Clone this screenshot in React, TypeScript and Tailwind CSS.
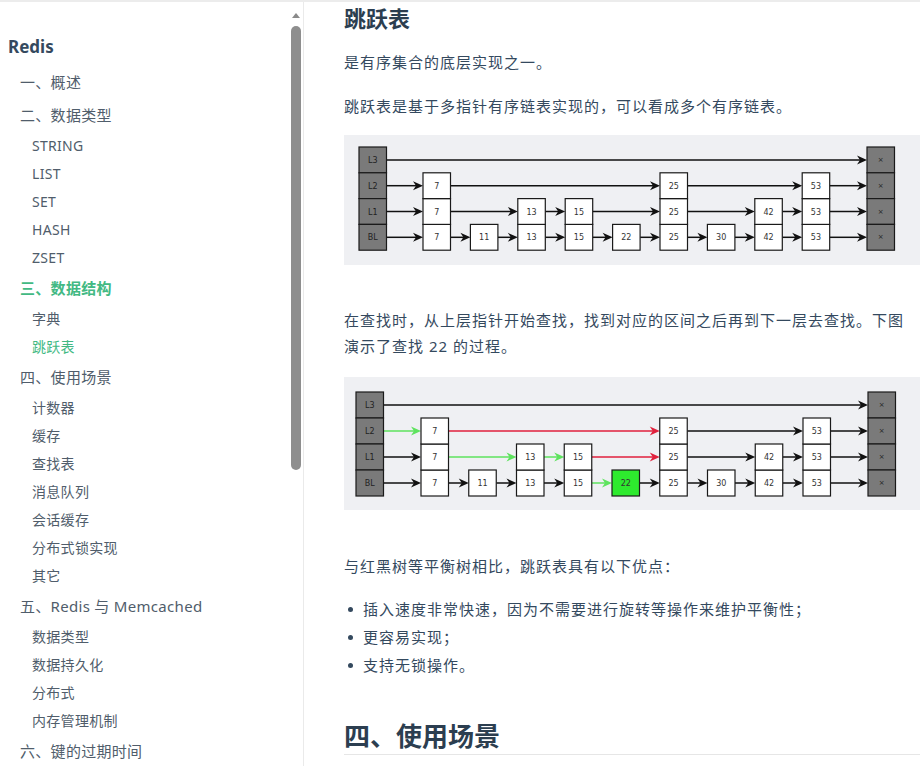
import React from "react"

type Nav = { label: string; sub?: boolean; active?: boolean; strong?: boolean }

const NAV: Nav[] = [
  { label: "一、概述" },
  { label: "二、数据类型" },
  { label: "STRING", sub: true },
  { label: "LIST", sub: true },
  { label: "SET", sub: true },
  { label: "HASH", sub: true },
  { label: "ZSET", sub: true },
  { label: "三、数据结构", active: true, strong: true },
  { label: "字典", sub: true },
  { label: "跳跃表", sub: true, active: true },
  { label: "四、使用场景" },
  { label: "计数器", sub: true },
  { label: "缓存", sub: true },
  { label: "查找表", sub: true },
  { label: "消息队列", sub: true },
  { label: "会话缓存", sub: true },
  { label: "分布式锁实现", sub: true },
  { label: "其它", sub: true },
  { label: "五、Redis 与 Memcached" },
  { label: "数据类型", sub: true },
  { label: "数据持久化", sub: true },
  { label: "分布式", sub: true },
  { label: "内存管理机制", sub: true },
  { label: "六、键的过期时间" },
]

const FONT = { fontFamily: '"Noto Sans", "Noto Sans CJK SC", sans-serif' }

// skip list data: key + number of levels
const KEYS = [7, 11, 13, 15, 22, 25, 30, 42, 53]
const LEVELS = [3, 1, 2, 2, 1, 3, 1, 2, 3]
const ROW_LABELS = ["L3", "L2", "L1", "BL"]

type Geo = { w: number; h: number; hx: number; y0: number; ch: number; cw: number; nx0: number; pitch: number; nil: number }

const GEO1: Geo = { w: 576, h: 130, hx: 15, y0: 12, ch: 25.8, cw: 27.5, nx0: 79, pitch: 47.4, nil: 523 }
const GEO2: Geo = { w: 576, h: 133, hx: 12, y0: 15, ch: 26, cw: 27.5, nx0: 77, pitch: 47.75, nil: 524 }

const GREEN = "#5ee35e"
const RED = "#e0213d"

function SkipDiagram({ geo, search }: { geo: Geo; search?: boolean }) {
  const { hx, y0, ch, cw, nx0, pitch, nil } = geo
  const nodeX = (i: number) => nx0 + i * pitch
  const rowY = (r: number) => y0 + r * ch

  // colour of the arrow that leaves column `from` on row `r`, for the search picture
  const arrowColor = (r: number, from: number) => {
    if (!search) return "#111"
    if (r === 1 && from === -1) return GREEN
    if (r === 1 && from === 0) return RED
    if (r === 2 && (from === 0 || from === 2)) return GREEN
    if (r === 2 && from === 3) return RED
    if (r === 3 && from === 3) return GREEN
    return "#111"
  }

  const arrows: React.ReactNode[] = []
  for (let r = 0; r < 4; r++) {
    const need = 4 - r
    const cols: number[] = [-1]
    KEYS.forEach((_, i) => {
      if (LEVELS[i] >= need) cols.push(i)
    })
    cols.push(99)
    for (let k = 0; k < cols.length - 1; k++) {
      const a = cols[k]
      const b = cols[k + 1]
      const x1 = a === -1 ? hx + cw : nodeX(a) + cw
      const x2 = b === 99 ? nil : nodeX(b)
      const y = rowY(r) + ch / 2
      const c = arrowColor(r, a)
      arrows.push(
        <g key={`${r}-${k}`}>
          <line x1={x1} y1={y} x2={x2 - 6} y2={y} stroke={c} strokeWidth={1.5} />
          <polygon points={`${x2},${y} ${x2 - 10},${y - 4.5} ${x2 - 7},${y} ${x2 - 10},${y + 4.5}`} fill={c} />
        </g>
      )
    }
  }

  return (
    <div className="bg-[#eff0f3]">
      <svg width={geo.w} height={geo.h} viewBox={`0 0 ${geo.w} ${geo.h}`} style={{ display: "block" }}>
        {arrows}
        {ROW_LABELS.map((l, r) => (
          <g key={l}>
            <rect x={hx} y={rowY(r)} width={cw} height={ch} fill="#7a7a7a" stroke="#1a1a1a" strokeWidth={1.2} />
            <text x={hx + cw / 2} y={rowY(r) + ch / 2 + 0.5} fontSize={8} fill="#222" textAnchor="middle" dominantBaseline="central" fontFamily="DejaVu Sans, sans-serif">
              {l}
            </text>
            <rect x={nil} y={rowY(r)} width={cw} height={ch} fill="#7a7a7a" stroke="#1a1a1a" strokeWidth={1.2} />
            <text x={nil + cw / 2} y={rowY(r) + ch / 2} fontSize={7} fill="#222" textAnchor="middle" dominantBaseline="central" fontFamily="DejaVu Sans, sans-serif">
              ×
            </text>
          </g>
        ))}
        {KEYS.map((key, i) =>
          Array.from({ length: LEVELS[i] }).map((_, lv) => {
            const r = 3 - lv
            const hit = search && key === 22
            return (
              <g key={`${key}-${lv}`}>
                <rect x={nodeX(i)} y={rowY(r)} width={cw} height={ch} fill={hit ? "#2eea2e" : "#fff"} stroke="#1a1a1a" strokeWidth={1.2} />
                <text x={nodeX(i) + cw / 2} y={rowY(r) + ch / 2 + 0.5} fontSize={8} fill="#333" textAnchor="middle" dominantBaseline="central" fontFamily="DejaVu Sans, sans-serif">
                  {key}
                </text>
              </g>
            )
          })
        )}
      </svg>
    </div>
  )
}

function Sidebar() {
  return (
    <aside className="flex w-[304px] shrink-0 border-r border-[#eaeaea]">
      <nav className="flex-1 pt-[29px]">
        <div className="h-[32px] pl-[8px] text-[17px] font-bold leading-[32px] text-[#34495e]">Redis</div>
        <ul className="mt-[3px]">
          {NAV.map((n) => (
            <li
              key={n.label}
              className={
                (n.sub ? "h-[28px] pl-[32px] text-[14px] leading-[28px]" : "h-[33px] pl-[20px] text-[15px] leading-[33px]") +
                " tracking-[0.3px] " +
                (n.active ? "text-[#42b983]" : "text-[#505d6b]") +
                (n.strong ? " font-semibold" : "")
              }
            >
              {n.label}
            </li>
          ))}
        </ul>
      </nav>
      {/* scrollbar */}
      <div className="flex w-[14px] flex-col items-center pt-[11px]">
        <div className="h-0 w-0 border-x-[4px] border-b-[5px] border-x-transparent border-b-[#8a8a8a]" />
        <div className="mt-[8px] h-[444px] w-[10px] rounded-full bg-[#8e8e8e]" />
      </div>
    </aside>
  )
}

export default function App() {
  return (
    <div className="flex h-[766px] w-[920px] overflow-hidden border-t-2 border-[#ececec] bg-white" style={FONT}>
      <Sidebar />
      <main className="flex-1 overflow-hidden pl-[40px] text-[#34495e]">
        <div className="w-[576px]">
          <h3 className="h-[32px] text-[22px] font-bold leading-[32px] text-[#2c3e50]">跳跃表</h3>
          <p className="mt-[15px] text-[15px] leading-[26px] tracking-[1px]">是有序集合的底层实现之一。</p>
          <p className="mt-[18px] text-[15px] leading-[26px] tracking-[1px]">跳跃表是基于多指针有序链表实现的，可以看成多个有序链表。</p>
          <div className="mt-[16px]">
            <SkipDiagram geo={GEO1} />
          </div>
          <p className="mt-[42px] w-[566px] text-[15px] leading-[26px] tracking-[1px]">
            在查找时，从上层指针开始查找，找到对应的区间之后再到下一层去查找。下图演示了查找 22 的过程。
          </p>
          <div className="mt-[18px]">
            <SkipDiagram geo={GEO2} search />
          </div>
          <p className="mt-[43px] text-[15px] leading-[26px] tracking-[1px]">与红黑树等平衡树相比，跳跃表具有以下优点：</p>
          <ul className="mt-[16px] text-[15px] leading-[28px] tracking-[1px]">
            {["插入速度非常快速，因为不需要进行旋转等操作来维护平衡性；", "更容易实现；", "支持无锁操作。"].map((t) => (
              <li key={t} className="flex items-center pl-[4px]">
                <span className="mr-[10px] h-[5px] w-[5px] shrink-0 rounded-full bg-[#34495e]" />
                {t}
              </li>
            ))}
          </ul>
          <h2 className="mt-[39px] h-[37px] border-b border-[#e6e6e6] text-[26px] font-bold leading-[36px] text-[#2c3e50]">
            四、使用场景
          </h2>
        </div>
      </main>
    </div>
  )
}
